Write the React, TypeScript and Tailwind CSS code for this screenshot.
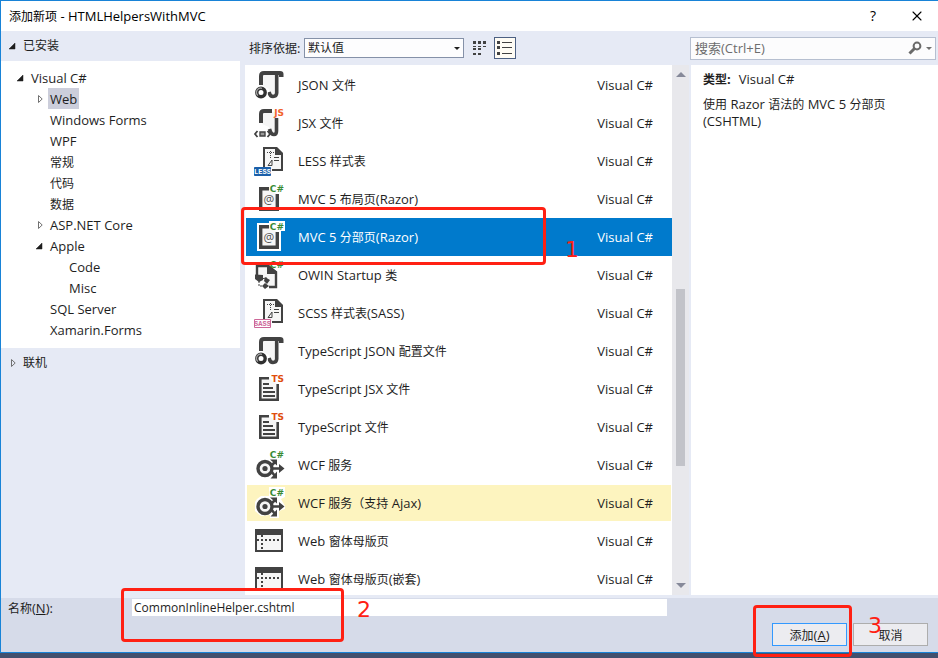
import { Fragment, useState } from 'react';
import type { ReactNode } from 'react';
import { X } from 'lucide-react';
import clsx from 'clsx';

type IconKind = 'json' | 'jsx' | 'less' | 'razor' | 'owin' | 'sass' | 'ts' | 'wcf' | 'form';

const templates: { name: string; icon: IconKind }[] = [
  { name: 'JSON 文件', icon: 'json' },
  { name: 'JSX 文件', icon: 'jsx' },
  { name: 'LESS 样式表', icon: 'less' },
  { name: 'MVC 5 布局页(Razor)', icon: 'razor' },
  { name: 'MVC 5 分部页(Razor)', icon: 'razor' },
  { name: 'OWIN Startup 类', icon: 'owin' },
  { name: 'SCSS 样式表(SASS)', icon: 'sass' },
  { name: 'TypeScript JSON 配置文件', icon: 'json' },
  { name: 'TypeScript JSX 文件', icon: 'ts' },
  { name: 'TypeScript 文件', icon: 'ts' },
  { name: 'WCF 服务', icon: 'wcf' },
  { name: 'WCF 服务（支持 Ajax)', icon: 'wcf' },
  { name: 'Web 窗体母版页', icon: 'form' },
  { name: 'Web 窗体母版页(嵌套)', icon: 'form' },
];

const HOVERED = 11;

const tree: { name: string; level: 0 | 1 | 2; state?: 'open' | 'closed' }[] = [
  { name: 'Visual C#', level: 0, state: 'open' },
  { name: 'Web', level: 1, state: 'closed' },
  { name: 'Windows Forms', level: 1 },
  { name: 'WPF', level: 1 },
  { name: '常规', level: 1 },
  { name: '代码', level: 1 },
  { name: '数据', level: 1 },
  { name: 'ASP.NET Core', level: 1, state: 'closed' },
  { name: 'Apple', level: 1, state: 'open' },
  { name: 'Code', level: 2 },
  { name: 'Misc', level: 2 },
  { name: 'SQL Server', level: 1 },
  { name: 'Xamarin.Forms', level: 1 },
];

const indent = ['pl-[14px]', 'pl-[33px]', 'pl-[52px]'];

// Chinese runs are set one size smaller than the Latin around them
function Mixed({ text }: { text: string }) {
  return (
    <>
      {text.split(/([\u3000-\u9fff\uff00-\uffef]+)/).map((part, i) =>
        i % 2 ? (
          <span key={i} className="text-xs leading-none">{part}</span>
        ) : (
          <Fragment key={i}>{part}</Fragment>
        ),
      )}
    </>
  );
}

function Expander({ state }: { state?: 'open' | 'closed' }) {
  return (
    <svg viewBox="0 0 10 10" className="w-[10px] h-[10px] shrink-0" aria-hidden="true">
      {state === 'open' && <path d="M8 2V8H2Z" fill="#1e1e1e" stroke="#1e1e1e" strokeWidth="0.5" />}
      {state === 'closed' && <path d="M4.5 1.5V8.5L8.2 5Z" fill="none" stroke="#717171" />}
    </svg>
  );
}

function Tag({ text, color }: { text: string; color: string }) {
  return (
    <text x="31" y="9" textAnchor="end" fontSize="9" fontWeight="700" fontFamily="DejaVu Sans, sans-serif" fill={color}>
      {text}
    </text>
  );
}

function Scroll() {
  return (
    <>
      <path d="M9 5H22V24L16 27V20L9 17Z" fill="#f6f6f6" />
      <path d="M8 16V7Q8 4 11 4H19" fill="none" stroke="#424242" strokeWidth="4" />
    </>
  );
}

function StyleSheet() {
  return (
    <>
      <path d="M11 22V3H23L29 9V25H19" fill="#f6f6f6" stroke="#424242" strokeWidth="2" />
      <path d="M22 2H24L30 8V10H22Z" fill="#424242" />
      <path d="M14 7.5H21M17.5 6V14" stroke="#424242" strokeDasharray="1 1" />
      <path d="M21 12.5H26M21 15.5H26M15 20.5L19 15V20.5Z" stroke="#424242" fill="none" />
    </>
  );
}

function Badge({ text, color, inverted }: { text: string; color: string; inverted?: boolean }) {
  return (
    <>
      <path d="M1.5 22.5H17.5V30.5H1.5Z" fill={inverted ? '#fff' : color} stroke={color} />
      <text
        x="9.5"
        y="29"
        textAnchor="middle"
        fontSize="7"
        fontWeight="700"
        fontFamily="Liberation Mono, monospace"
        fill={inverted ? color : '#fff'}
      >
        {text}
      </text>
    </>
  );
}

const drawings: Record<IconKind, ReactNode> = {
  json: (
    <>
      <Scroll />
      <path d="M18 2H27Q30.5 2 30.5 5V8H26V6H18Z" fill="#424242" />
      <path d="M23.7 5V24Q23.5 27.5 20 27.5Q17 27.5 16 23" fill="none" stroke="#424242" strokeWidth="3.6" />
      <circle cx="8" cy="23.5" r="6.8" fill="#fff" />
      <circle cx="8" cy="23.5" r="4.2" fill="#fff" stroke="#303030" strokeWidth="3.4" />
      <path d="M5 26.5A4.2 4.2 0 0 1 9 19.3" fill="none" stroke="#a0a0a0" strokeWidth="1.3" />
    </>
  ),
  jsx: (
    <>
      <Scroll />
      <path d="M23.5 11V24Q23.5 27.5 21 27.5Q18 27.5 16.5 22" fill="none" stroke="#424242" strokeWidth="3.6" />
      <Tag text="JS" color="#f1622c" />
      <path d="M4.5 24L2 27L4.5 30M14.5 24L17 27L14.5 30" fill="none" stroke="#424242" strokeWidth="1.8" />
      <path d="M7 25H12V29H7Z" fill="#999" stroke="#424242" strokeWidth="1.4" />
    </>
  ),
  less: (
    <>
      <StyleSheet />
      <Badge text="LESS" color="#1b5fa9" />
    </>
  ),
  sass: (
    <>
      <StyleSheet />
      <Badge text="SASS" color="#cd6799" inverted />
    </>
  ),
  razor: (
    <>
      <path d="M4 2H16V0H32V10H28V30H4Z" fill="#fff" />
      <path d="M16 5.7H7.7V26.3H24.3V11" fill="#f6f6f6" stroke="#424242" strokeWidth="3.4" />
      <text x="16" y="21" textAnchor="middle" fontSize="12" fontFamily="Open Sans, sans-serif" fill="#555">@</text>
      <Tag text="C#" color="#388a34" />
    </>
  ),
  owin: (
    <>
      <path d="M4 17V7H15L23 13V28H16" fill="#f6f6f6" stroke="#424242" strokeWidth="2.4" />
      <path d="M14 6H16L24 13V15H14Z" fill="#424242" />
      <path d="M2 15.5L10 16V21L6 23L2 20ZM12 18L17 21L14 25L11 22ZM12 24L16 27L12 30L9 27Z" fill="#424242" />
      <path d="M7 20L14 19M6 22V27H12" fill="none" stroke="#424242" strokeDasharray="2 1" />
      <Tag text="C#" color="#388a34" />
    </>
  ),
  ts: (
    <>
      <path d="M16 5.3H7.3V26.7H24.7V11" fill="#f6f6f6" stroke="#424242" strokeWidth="2.6" />
      <path d="M10 11H16M10 15H20M10 19H22M10 23H22" stroke="#424242" strokeWidth="1.8" />
      <Tag text="TS" color="#e04e0e" />
    </>
  ),
  wcf: (
    <>
      <path d="M4 12L8 9H16V0H32V10L28 12L32 19V22L26 24V31H17V28L8 29L2 24V15Z" fill="#fff" />
      <circle cx="12" cy="19.5" r="7" fill="#f6f6f6" stroke="#424242" strokeWidth="3.4" />
      <circle cx="12" cy="19.5" r="2.6" fill="#424242" />
      <path d="M18 19.5H28M18 17L22 13M18 22L22 27" stroke="#424242" strokeWidth="2.6" />
      <path d="M26 15L31.5 19.5L26 24ZM17 10.5H24V16.5ZM24 22.5V29.5H17.5Z" fill="#424242" />
      <Tag text="C#" color="#388a34" />
    </>
  ),
  form: (
    <>
      <path d="M3 5H29V26H3Z" fill="#f6f6f6" stroke="#424242" strokeWidth="2" />
      <path d="M2 4H30V10H2Z" fill="#424242" />
      <path d="M4 15H27" stroke="#424242" strokeWidth="2" strokeDasharray="2 2" />
      <path d="M9 10V25" stroke="#424242" strokeWidth="2" strokeDasharray="2 2" />
    </>
  ),
};

function TemplateIcon({ kind }: { kind: IconKind }) {
  return (
    <svg viewBox="0 0 32 32" className="w-8 h-8 shrink-0 overflow-visible" aria-hidden="true">
      {drawings[kind]}
    </svg>
  );
}

function TemplateTree() {
  const [active, setActive] = useState('Web');

  return (
    <nav className="w-[239px] shrink-0">
      <button className="flex items-center gap-1.5 h-[30px] w-full pl-1.5">
        <Expander state="open" />
        <Mixed text="已安装" />
      </button>
      <ul className="bg-white pt-1.5 pb-2">
        {tree.map((node) => (
          <li key={node.name} className={clsx('flex items-center gap-1 h-[21px]', indent[node.level])}>
            <Expander state={node.state} />
            <button
              onClick={() => setActive(node.name)}
              className={clsx('h-[21px] px-0.5', active === node.name && 'bg-[#cccedb]')}
            >
              <Mixed text={node.name} />
            </button>
          </li>
        ))}
      </ul>
      <button className="flex items-center gap-1.5 h-[30px] w-full pl-1.5">
        <Expander state="closed" />
        <Mixed text="联机" />
      </button>
    </nav>
  );
}

function Toolbar() {
  return (
    <div className="flex items-center h-[34px] pl-1 shrink-0">
      <label htmlFor="sort" className="w-[55px] whitespace-nowrap">
        <Mixed text="排序依据:" />
      </label>
      <div className="relative w-[160px]">
        <select id="sort" className="block w-full h-5 pl-[3px] appearance-none bg-[#fdfdfe] border border-[#8591a8] text-xs leading-none">
          <option>默认值</option>
        </select>
        <svg viewBox="0 0 6 3" className="absolute right-1 top-[9px] w-[6px] h-[3px] pointer-events-none" aria-hidden="true">
          <path d="M0 0H6L3 3Z" fill="#1e1e1e" />
        </svg>
      </div>
      <button aria-label="小图标" className="flex items-center justify-center w-[22px] h-[22px] ml-[5px]">
        <svg viewBox="0 0 14 14" className="w-[14px] h-[14px]" aria-hidden="true">
          <path d="M0 0h3v3H0zM5 0h3v3H5zM10 0h3v3h-3zM0 5h3v1H0zM5 5h3v1H5zM10 5h3v1h-3zM0 7h3v2H0zM5 7h3v2H5zM0 12h3v2H0zM5 12h3v2H5z" fill="#424242" />
        </svg>
      </button>
      <button aria-label="列表" className="flex items-center justify-center w-[22px] h-[22px] ml-[3px] bg-[#fffcf4] border border-[#4d6082]">
        <svg viewBox="0 0 16 14" className="w-4 h-[14px] shrink-0" aria-hidden="true">
          <path d="M0 0h3v3H0zM0 5h3v3H0zM0 11h3v3H0zM5 1h10v1H5zM5 6h10v1H5zM5 12h10v1H5z" fill="#424242" />
        </svg>
      </button>
    </div>
  );
}

function ScrollBar() {
  return (
    <div className="flex flex-col items-center w-[17px] bg-[#e8e8ec] shrink-0">
      <svg viewBox="0 0 10 5" className="w-[10px] h-[5px] my-[7px] shrink-0" aria-hidden="true">
        <path d="M0 5H10L5 0Z" fill="#868999" />
      </svg>
      <div className="flex-[206]" />
      <div className="flex-[178] w-[9px] bg-[#c2c3c9]" />
      <div className="flex-[110]" />
      <svg viewBox="0 0 10 5" className="w-[10px] h-[5px] my-[7px] shrink-0" aria-hidden="true">
        <path d="M0 0H10L5 5Z" fill="#868999" />
      </svg>
    </div>
  );
}

function rowColor(selected: boolean, hovered: boolean) {
  if (selected) return 'bg-[#007acc] border-[#007acc] text-white';
  if (hovered) return 'bg-[#fdf4bf] border-white';
  return 'border-white';
}

function TemplateList() {
  const [selected, setSelected] = useState(4);

  return (
    <div className="flex flex-1 min-h-0 bg-white">
      <ul className="flex-1 min-w-0 overflow-hidden pl-px pt-px">
        {templates.map((item, i) => (
          <li key={item.name}>
            <button
              onClick={() => setSelected(i)}
              className={clsx(
                'flex items-center w-full h-[38px] pl-1.5 pr-[18px] text-left border',
                rowColor(i === selected, i === HOVERED),
              )}
            >
              <TemplateIcon kind={item.icon} />
              <span className="flex-1 pl-[13px] whitespace-nowrap">
                <Mixed text={item.name} />
              </span>
              <span>Visual C#</span>
            </button>
          </li>
        ))}
      </ul>
      <ScrollBar />
    </div>
  );
}

function Details() {
  return (
    <aside className="flex flex-col w-[249px] shrink-0">
      <div className="flex items-center h-[34px] pl-px pr-0.5 shrink-0">
        <div className="flex items-center w-full h-[23px] pl-1 pr-[3px] bg-[#fcfcfd] border border-[#b6bfd0]">
          <input
            aria-label="搜索"
            placeholder="搜索(Ctrl+E)"
            className="flex-1 min-w-0 bg-transparent outline-none placeholder:text-[#6d6d6d]"
          />
          <svg viewBox="0 0 14 14" className="w-[14px] h-[14px]" aria-hidden="true">
            <circle cx="9" cy="5" r="3.4" fill="none" stroke="#6a6a6a" strokeWidth="2" />
            <path d="M6.5 7.5L1.5 12.5" stroke="#6a6a6a" strokeWidth="3" />
          </svg>
          <svg viewBox="0 0 6 3" className="w-[6px] h-[3px] ml-1" aria-hidden="true">
            <path d="M0 0H6L3 3Z" fill="#717171" />
          </svg>
        </div>
      </div>
      <div className="flex-1 ml-0.5 pl-3 pr-10 pt-1.5 bg-white leading-[17px]">
        <p>
          <b className="mr-2"><Mixed text="类型:" /></b>Visual C#
        </p>
        <p className="mt-2">
          <Mixed text="使用 Razor 语法的 MVC 5 分部页(CSHTML)" />
        </p>
      </div>
    </aside>
  );
}

export default function App() {
  return (
    <div className="h-screen pb-[5px] bg-[#42506e] font-['Open_Sans','Noto_Sans_CJK_SC',sans-serif] text-[13px] leading-4 text-[#1e1e1e]">
      <div className="relative flex flex-col h-full bg-[#e6eaf5] border-t border-l border-b border-[#1883d7]">
        <header className="flex items-center h-[30px] pl-2 pr-[13px] bg-white text-black shrink-0">
          <h1 className="flex-1"><Mixed text="添加新项 - HTMLHelpersWithMVC" /></h1>
          <button aria-label="帮助" className="w-6 mr-6 text-sm font-medium">?</button>
          <button aria-label="关闭"><X className="w-4 h-4" strokeWidth={1.6} /></button>
        </header>

        <main className="flex flex-1 min-h-0 pb-[3px]">
          <TemplateTree />
          <section className="flex flex-col flex-1 min-w-0 pl-[5px]">
            <Toolbar />
            <TemplateList />
          </section>
          <Details />
        </main>

        <footer className="relative h-[54px] shrink-0 bg-[#d6dbe9]">
          <div className="flex items-center h-[19px] pl-[7px] pr-[271px]">
            <label htmlFor="file-name" className="w-[124px] shrink-0">
              <Mixed text="名称(" /><u>N</u>):
            </label>
            <input
              id="file-name"
              defaultValue="CommonInlineHelper.cshtml"
              className="flex-1 min-w-0 h-[17px] px-0.5 bg-white text-xs outline-none"
            />
          </div>
          <div className="flex justify-end gap-1.5 pt-1.5 pr-[10px]">
            <button className="w-[75px] h-[23px] bg-[#ececf0] border border-[#3399ff]">
              <Mixed text="添加(" /><u>A</u>)
            </button>
            <button className="w-[75px] h-[23px] bg-[#ececf0] border border-[#adadad]">
              <Mixed text="取消" />
            </button>
          </div>

          {/* steps 2 and 3 */}
          <div className="absolute left-[120px] -top-[10px] w-[223px] h-[54px] border-3 border-[#ff2013] rounded-sm pointer-events-none" />
          <span className="absolute left-[356px] top-0 font-['DejaVu_Sans',sans-serif] text-[22px] leading-6 text-[#ff2013] pointer-events-none">2</span>
          <div className="absolute right-[86px] top-[7px] w-[99px] h-[52px] border-3 border-[#ff2013] rounded-sm pointer-events-none" />
          <span className="absolute right-[56px] top-4 font-['DejaVu_Sans',sans-serif] text-[22px] leading-6 text-[#ff2013] pointer-events-none">3</span>
        </footer>

        {/* step 1 */}
        <div className="absolute left-[240px] top-[206px] w-[305px] h-[58px] border-3 border-[#ff2013] rounded-sm pointer-events-none" />
        <span className="absolute left-[564px] top-[237px] font-['DejaVu_Sans',sans-serif] text-[22px] leading-6 text-[#ff2013] pointer-events-none">1</span>
      </div>
    </div>
  );
}
